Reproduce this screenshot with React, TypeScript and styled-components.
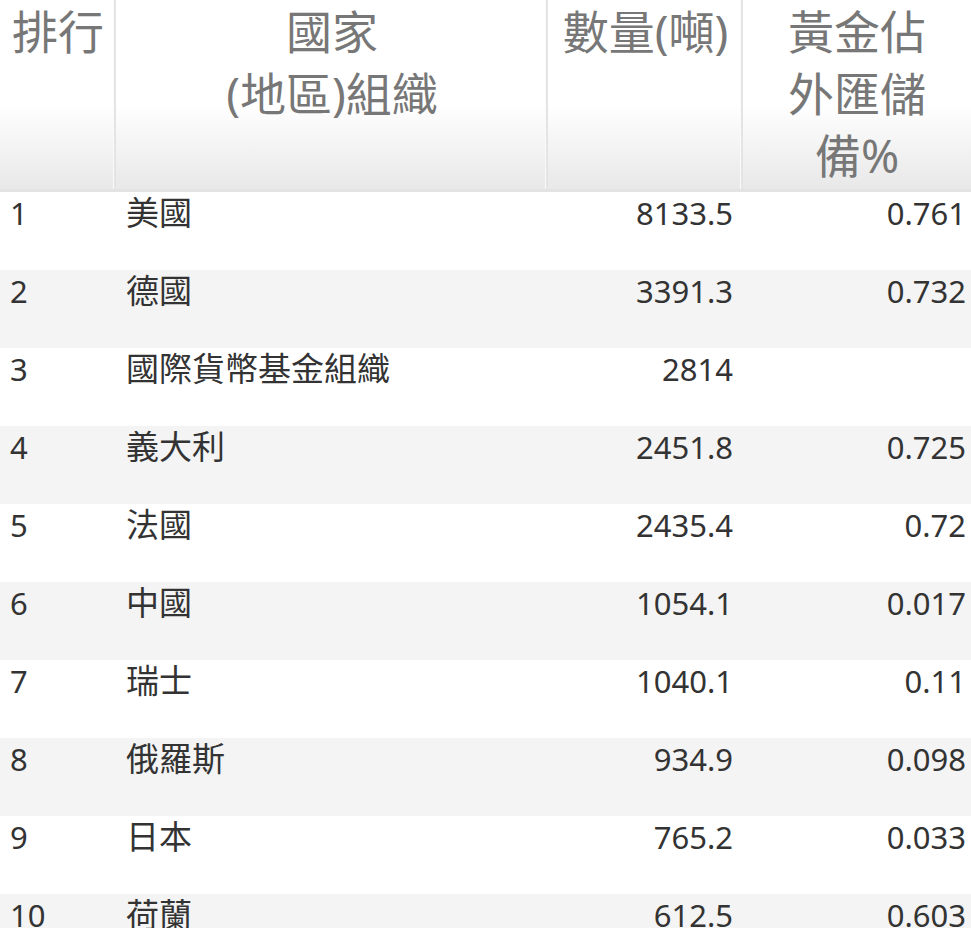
import React from "react";
import styled, { createGlobalStyle } from "styled-components";

const Global = createGlobalStyle`
  body { margin: 0; background: #fff; font-family: "Noto Sans", "Noto Sans CJK TC", sans-serif; }
`;

const Table = styled.div`
  display: grid;
  grid-template-columns: 116px 432px 195px 228px;
  width: 971px;
`;

const Head = styled.div<{ $last?: boolean }>`
  height: 189px;
  border-bottom: 3px solid #e3e3e3;
  box-shadow: ${(p) => (p.$last ? "none" : "inset -2px 0 0 #e4e4e4, inset -3px 0 0 #fafafa")};
  background: linear-gradient(#ffffff 0%, #ffffff 55%, #e8e8e8 100%);
  color: #777;
  font-size: 46px;
  line-height: 62px;
  text-align: center;
  overflow: hidden;
`;

const Cell = styled.div<{ $alt: boolean; $right?: boolean; $pr?: number }>`
  height: 78px;
  box-sizing: border-box;
  background: ${(p) => (p.$alt ? "#f4f4f4" : "#fff")};
  color: #333;
  font-size: 31px;
  line-height: 42px;
  padding: 0 ${(p) => p.$pr ?? 10}px 0 10px;
  text-align: ${(p) => (p.$right ? "right" : "left")};
  white-space: nowrap;
`;

const Cjk = styled.span`
  font-size: 33px;
`;

const rows: [string, string, string, string][] = [
  ["1", "美國", "8133.5", "0.761"],
  ["2", "德國", "3391.3", "0.732"],
  ["3", "國際貨幣基金組織", "2814", ""],
  ["4", "義大利", "2451.8", "0.725"],
  ["5", "法國", "2435.4", "0.72"],
  ["6", "中國", "1054.1", "0.017"],
  ["7", "瑞士", "1040.1", "0.11"],
  ["8", "俄羅斯", "934.9", "0.098"],
  ["9", "日本", "765.2", "0.033"],
  ["10", "荷蘭", "612.5", "0.603"],
];

export default function App() {
  return (
    <>
      <Global />
      <Table>
        <Head>排行</Head>
        <Head>國家<br />(地區)組織</Head>
        <Head>數量(噸)</Head>
        <Head $last>黃金佔<br />外匯儲<br />備%</Head>
        {rows.map((r, i) => (
          <React.Fragment key={i}>
            <Cell $alt={i % 2 === 1}>{r[0]}</Cell>
            <Cell $alt={i % 2 === 1}><Cjk>{r[1]}</Cjk></Cell>
            <Cell $alt={i % 2 === 1} $right>{r[2]}</Cell>
            <Cell $alt={i % 2 === 1} $right $pr={5}>{r[3]}</Cell>
          </React.Fragment>
        ))}
      </Table>
    </>
  );
}
